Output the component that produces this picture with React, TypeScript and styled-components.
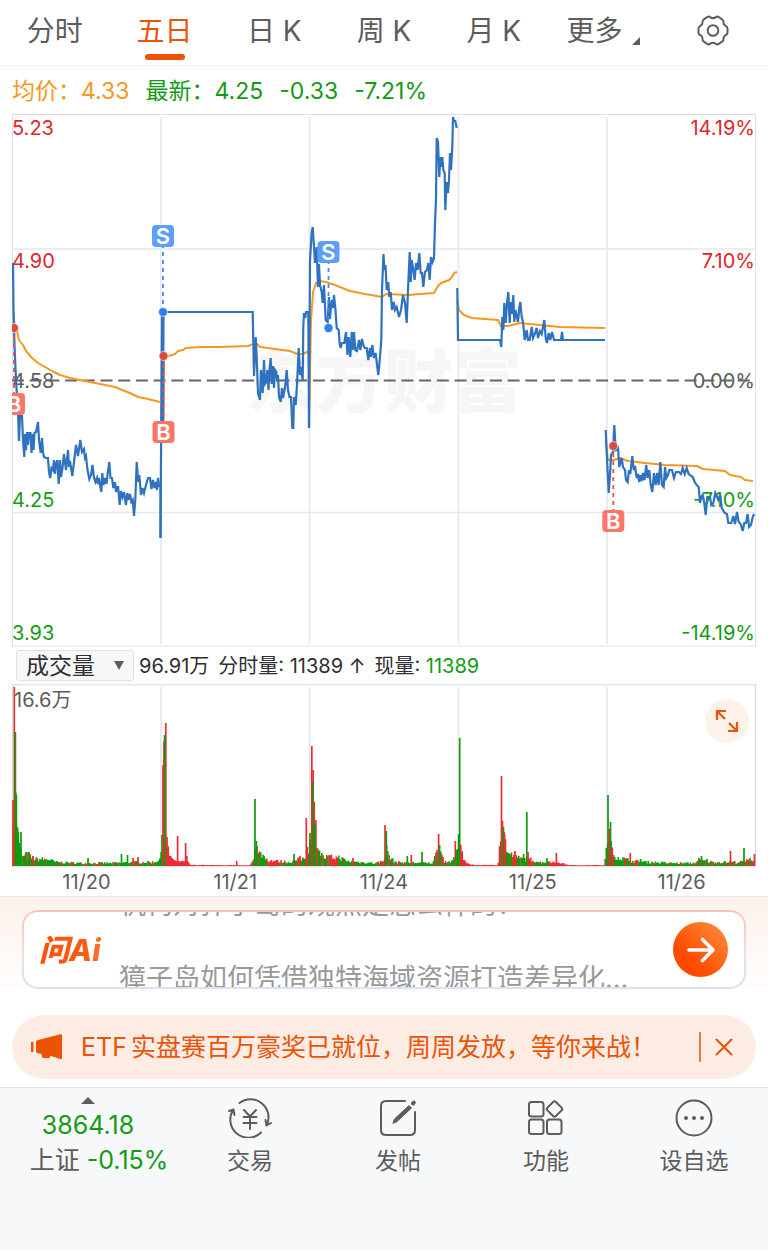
import React from "react";
import styled, { createGlobalStyle, css } from "styled-components";

const Global = createGlobalStyle`
  *, *::before, *::after { box-sizing: border-box; }
  body {
    margin: 0;
    background: #fff;
    color: #333;
    font-family: Inter, "Noto Sans CJK SC", sans-serif;
    font-size: 20px;
    line-height: 28px;
  }
  button { border: 0; padding: 0; margin: 0; background: none; font: inherit; color: inherit; cursor: pointer; }
  a { color: inherit; text-decoration: none; }
  svg { display: block; }
`;

const RED = "#e0252b";
const GREEN = "#149b14";
const BLUE = "#2f72bf";
const AMBER = "#f5981d";
const ORANGE = "#ea5404";
const GREY = "#5c5c5c";

/* ---------- layout ---------- */

const Page = styled.div`
  display: flex;
  flex-direction: column;
  min-height: 100vh;
`;

const Tabs = styled.nav`
  display: flex;
  height: 66px;
  border-bottom: 1px solid #f0f0f2;
`;

const Tab = styled.button<{ $active?: boolean }>`
  position: relative;
  flex: 1;
  display: flex;
  align-items: center;
  justify-content: center;
  padding-bottom: 4px;
  font-size: 28px;
  color: ${(p) => (p.$active ? ORANGE : GREY)};
  ${(p) =>
    p.$active &&
    css`
      &::after {
        content: "";
        position: absolute;
        left: calc(50% - 20px);
        bottom: 5px;
        width: 40px;
        height: 6px;
        border-radius: 3px;
        background: ${ORANGE};
      }
    `}
`;

const Corner = styled.span`
  align-self: flex-end;
  margin: 0 0 16px 10px;
  border-left: 8px solid transparent;
  border-bottom: 8px solid ${GREY};
`;

const Quote = styled.div`
  display: flex;
  align-items: center;
  gap: 16px;
  height: 48px;
  padding: 2px 12px 0;
  font-size: 23px;
  color: ${GREEN};
`;

const Average = styled.span`
  color: ${AMBER};
`;

const ChartSvg = styled.svg`
  width: 100%;
  height: auto;
`;

const VolumeHead = styled.div`
  display: flex;
  align-items: center;
  gap: 9px;
  height: 37px;
  padding: 0 16px;
  color: #2e2e33;
  white-space: nowrap;
`;

const Picker = styled.label`
  position: relative;
  width: 118px;
  height: 31px;
  margin-right: -4px;
  &::after {
    content: "";
    position: absolute;
    right: 10px;
    top: 11px;
    border: 5px solid transparent;
    border-top: 9px solid ${GREY};
    border-bottom: 0;
    pointer-events: none;
  }
`;

const PickerSelect = styled.select`
  appearance: none;
  width: 100%;
  height: 100%;
  padding: 0 9px;
  border: 1px solid #dfe1e6;
  border-radius: 3px;
  background: #f6f7f9;
  color: #2e2e33;
  font: inherit;
  font-size: 23px;
  line-height: 28px;
`;

const Up = styled.span`
  color: ${GREEN};
`;

const VolumeBox = styled.div`
  position: relative;
`;

const Expand = styled.button`
  position: absolute;
  top: 15px;
  right: 19px;
  display: grid;
  place-items: center;
  width: 44px;
  height: 44px;
  border-radius: 50%;
  background: #fdf1ea;
`;

const Dates = styled.div`
  display: flex;
  height: 28px;
  padding: 0 12px;
  color: ${GREY};
  span { flex: 1; text-align: center; }
`;

const AiSection = styled.section`
  padding: 13px 22px 0;
  border-top: 1px solid #ebe9ec;
  background: linear-gradient(#fef1eb, #fff 104px);
`;

const AiCard = styled.div`
  display: flex;
  align-items: center;
  height: 79px;
  padding: 0 16px 0 15px;
  border: 2px solid transparent;
  border-radius: 16px;
  background:
    linear-gradient(#fff, #fff) padding-box,
    linear-gradient(#f8c3b8, #f0dce0 55%, #dbe0f2) border-box;
`;

const Logo = styled.span`
  width: 80px;
  font-size: 30px;
  line-height: 40px;
  font-weight: 800;
  font-style: italic;
  white-space: nowrap;
  color: transparent;
  background: linear-gradient(90deg, #ff4e08, #ff5d14 60%, #ff8a50);
  background-clip: text;
`;

const Ticker = styled.div`
  flex: 1;
  display: flex;
  flex-direction: column;
  justify-content: center;
  gap: 36px;
  height: 75px;
  padding-bottom: 16px;
  overflow: hidden;
  font-size: 27px;
  line-height: 38px;
  color: #999;
  white-space: nowrap;
`;

const Go = styled.button`
  display: grid;
  place-items: center;
  width: 55px;
  height: 55px;
  border-radius: 50%;
  background: linear-gradient(45deg, #ff4a00 30%, #ff9340);
`;

const Notice = styled.aside`
  display: flex;
  align-items: center;
  height: 64px;
  margin: 26px 12px 8px;
  padding: 0 23px 0 18px;
  border-radius: 32px;
  background: #fdece4;
  color: ${ORANGE};
  font-size: 25px;
`;

const NoticeText = styled.a`
  flex: 1;
  display: flex;
  gap: 4px;
  margin-left: 18px;
  white-space: nowrap;
`;

const Close = styled.button`
  display: flex;
  align-items: center;
  height: 30px;
  padding-left: 14px;
  border-left: 2px solid #ec7a3e;
`;

const BottomBar = styled.footer`
  flex: 1;
  display: grid;
  grid-template-columns: 176fr 148fr 148fr 148fr 148fr;
  align-items: start;
  padding-bottom: 70px;
  border-top: 1px solid #dfe2e2;
  background: #f6f8fa;
  color: ${GREY};
`;

const IndexCell = styled.button`
  display: flex;
  flex-direction: column;
  align-items: center;
  padding-top: 9px;
  font-size: 25px;
  line-height: 35px;
`;

const Caret = styled.span`
  margin-bottom: 4px;
  border: 7px solid transparent;
  border-top: 0;
  border-bottom-color: ${GREY};
`;

const IndexValue = styled.span`
  color: ${GREEN};
`;

const IndexChange = styled.span`
  padding-left: 22px;
  white-space: nowrap;
`;

const NavItem = styled.a`
  display: flex;
  flex-direction: column;
  align-items: center;
  gap: 6px;
  padding-top: 10px;
  font-size: 23px;
  line-height: 34px;
`;

/* ---------- price chart data: one polyline for each trading day ---------- */

const PRICE = [
  "13,263 13.5,310 14.5,345 16,380 17,396 18,412 19,441 20,416 22,416 23,440 24.3,457 25,434 26,450 27,432 28,445 29,433 30.5,433 31.5,453 32.5,434 33.5,450 34.5,433 36,432 38,422 39,440 40.7,453 42,438 43,452 44,457 46,458 48,458 49,472 50.2,478 51.5,468 53,470 54,460 55,474 56,464 57.3,460 58.7,484 60,460 61,477 62.5,468 64,454 66,470 68,450 69,467 70,461 71,468 72.3,476 74,462 76,445 78,456 80.3,440 82,452 84,449 85,458 86,456 87.5,470 89.3,479 91,475 92.5,465 94,478 95.5,482 97,478 98,484 99,478 100,485 101.3,492 102.3,473 103.5,485 105,478 106.5,484 107.5,475 109.3,462 110.5,478 112,478 113.3,488 115,482 116,492 118,486 119.7,505 121,491 122.5,497 124,492 126,505 127.3,493 128.3,500 130,494 131.3,502 132.7,500 134,516 135.3,500 136.7,462 138.3,482 139.3,475 141,495 142.5,488 144,493 146,485 148,478 150,478 151.5,489 153,480 154.5,488 156,482 157,490 158,478 159,486 160.5,486 160.5,538",
  "160.5,538 161.5,380 162,312 163,430 163.5,312 252.7,312 254,376 255.7,337 256.7,357 258,393 260,400 261,370 262.7,393 264,360 265,384 266.3,382 267.3,370 268.5,390 269.5,370 270.7,358 271.7,384 273,366 274,388 275,370 276.3,372 277.3,382 278,375 279,397 280.7,402 282,388 283,398 284.5,390 285.5,384 286.7,370 288,390 289.5,397 291,397 292.3,428 293.3,428 294,397 295,400 295.7,405 297,385 298.7,348 300,375 301,367 302.7,380 303.3,327 304,313 305.3,318 306,312 308.3,312 309,428",
  "309,428 310,260 311.7,232 312.7,227 314,247 315,263 316.7,247 318,287 319,264 320,285 321.7,292 322.7,303 324,285 325.7,320 327.7,322 329,297 330,319 331,306 332,300 333,308 334,295 335.5,310 336.7,328 338.7,330 339.7,344 340.7,348 342,343 344.3,343 346,332 347.5,355 348.7,337 350.3,357 351.7,332 352.7,350 354,332 355.3,350 357,351 359,340 360.3,350 362,339 363.3,345 364.7,348 366.7,348 368.3,360 370,348 371,357 372.3,345 374,358 375.7,353 377,365 378.3,375 380,357 381.3,340 382,290 383.5,254 384.3,270 385.5,265 386.7,290 388.3,282 389.3,297 390.7,292 392,310 393.7,302 395,310 396.7,307 399,317 401,310 403,295 405,303 406.7,323 408.3,283 409.7,252 410.7,282 411.7,260 413.3,270 414.7,280 416,263 417.7,270 419.3,253 420.7,273 422,273 423.3,287 425,272 427,270 428.3,263 429.7,280 431,257 432.5,262 434,258 435,223 436,200 436.7,138 438,142 439.3,177 440.3,157 441.3,167 442.3,157 443.3,170 444.7,173 445.3,210 446.7,182 448,193 449,180 450,153 451,170 452.3,147 453,117 454,121 455.3,121 456.7,128",
  "457.3,288 458,340 500,340 501.3,347 502.3,317 503.3,330 504.3,303 505.7,323 507,303 508.3,292 509.7,323 510.7,302 511.7,314 513.3,295 514.3,322 515.5,310 516.7,316 518,322 519.3,308 520.3,302 521.7,317 523,322 524.7,340 526.7,330 528,340 529.7,340 531.7,327 533,338 534.7,334 536.7,328 538,338 540,331 541.7,334 544.3,320 545.7,338 547,343 548.7,333 550.3,340 552,332 554,340 561,340 562,332 563,340 605,340",
  "605.7,430 606.7,453 608.7,493 610,475 611,455 613,452 614.3,425 615.7,450 618,448 619.3,467 621.7,458 623,467 625,470 626,480 627.7,482 629,470 630.3,474 632.3,456 633.7,470 635,466 636.7,478 638,474 639.3,482 640.7,475 642,481 643,473 644.5,480 646.3,465 647.5,478 649.3,470 650.7,485 652.3,492 654,473 655.7,485 657.3,473 658.7,485 660.3,462 662,485 663.7,487 665,467 666.3,478 668,475 669.3,470 672,470 674,478 676,472 679,472 681,474 682.7,468 684.7,474 686.7,468 688.7,474 690,475 692.7,477 694.7,482 696.7,485 698.7,487 700,503 701.3,497 702.7,495 704.3,503 705.7,515 707.3,497 710,497 711.3,505 713.3,503 715.3,493 718.3,500 720.3,495 721.7,508 724.7,513 727,514 728.3,523 731.3,523 733.3,516 735,524 737,512 738.7,522 740.7,524 742.7,531 744.3,523 746,523 747.7,514 749,527 751,525 752.7,517 754,514",
];

const AVERAGE = [
  "13.5,312 14.5,325 17,331 19,340 23,345 26,351 32,358 38,363 45,367 52,371 60,375 70,378 80,380 90,382 100,384 115,387 122,390 130,393 138,397 148,399 160,402",
  "163.5,420 164,357 169,356 175,354 178,351 183,350 186,348 200,347 220,347 248,346 256,343 260,347 275,349 290,351 297,354 303,354 309,351",
  "309,428 311,320 313,292 316,283 320,281 326,282 335,285 350,291 365,294 382,297 386,294 408,295 420,294 434,293 438,286 441,283 449,280 452,277 454,273 457,272",
  "457.3,300 459,310 464,315 472,318 485,319 498,320 501,326 508,326 520,323 540,325 560,327 605,328",
  "605.7,440 608,460 614,460 620,458 628,461 645,463 665,465 697,466 703,469 725,471 730,475 741,477 745,480 753,481",
];

const LABELS = [
  { y: 135, left: "5.23", right: "14.19%", color: RED },
  { y: 268, left: "4.90", right: "7.10%", color: RED },
  { y: 388, left: "4.58", right: "0.00%", color: GREY },
  { y: 507, left: "4.25", right: "-7.10%", color: GREEN },
  { y: 640, left: "3.93", right: "-14.19%", color: GREEN },
];

const DAY_LINES = [161, 309.5, 458.5, 607];

type Trade = { kind: "S" | "B"; x: number; box: number; dot: number };

const TRADES: Trade[] = [
  { kind: "B", x: 14, box: 404, dot: 328 },
  { kind: "S", x: 163, box: 236, dot: 312 },
  { kind: "B", x: 163.5, box: 432, dot: 356 },
  { kind: "S", x: 328.5, box: 252, dot: 328 },
  { kind: "B", x: 613.3, box: 521, dot: 446 },
];

function TradeMark({ kind, x, box, dot }: Trade) {
  const sell = kind === "S";
  const line = sell ? "#3f8af2" : "#e8504a";
  return (
    <g>
      <line x1={x} x2={x} y1={box} y2={dot} stroke={line} strokeWidth="1.8" strokeDasharray="4 4" />
      <circle cx={x} cy={dot} r="4.5" fill={sell ? "#2b7ff0" : "#de4a41"} stroke="#fff" strokeOpacity="0.6" />
      <rect x={x - 11} y={box - 11} width="22" height="22" rx="4" fill={sell ? "#5b9ffb" : "#fb7568"} />
      <text x={x} y={box + 8} textAnchor="middle" fontSize="22" fontWeight="600" fill="#fff">
        {kind}
      </text>
    </g>
  );
}

function PriceChart() {
  return (
    <ChartSvg viewBox="0 114 768 533" role="img" aria-label="五日走势">
      <clipPath id="plot">
        <rect x="12" y="114" width="744" height="533" />
      </clipPath>
      <text x="246" y="407" fontSize="69" fontWeight="900" fill="#f6f6f6">
        东方财富
      </text>
      <g stroke="#e6e8ee" strokeWidth="1.6" fill="none">
        <path d="M12 249H755M12 512.5H755" />
        {DAY_LINES.map((x) => (
          <path key={x} d={`M${x} 117V644`} />
        ))}
      </g>
      <rect x="12.5" y="114.5" width="743" height="531.5" fill="none" stroke="#dfe0e4" />
      {LABELS.map((l) => (
        <g key={l.y} fontSize="20" fill={l.color}>
          <text x="12" y={l.y}>{l.left}</text>
          <text x="755" y={l.y} textAnchor="end">{l.right}</text>
        </g>
      ))}
      <path d="M12 380.5H755" stroke="#666" strokeWidth="1.8" strokeDasharray="12 5.7" />
      <g clipPath="url(#plot)" fill="none" strokeLinejoin="round">
        {AVERAGE.map((pts) => (
          <polyline key={pts} points={pts} stroke={AMBER} strokeWidth="2" />
        ))}
        {PRICE.map((pts) => (
          <polyline key={pts} points={pts} stroke={BLUE} strokeWidth="2.2" strokeLinejoin="miter" />
        ))}
      </g>
      <g clipPath="url(#plot)">
        {TRADES.map((t) => (
          <TradeMark key={`${t.x}${t.kind}`} {...t} />
        ))}
      </g>
    </ChartSvg>
  );
}

/* ---------- volume chart: a low envelope with single tall bars over it ---------- */

const ENVELOPE: [number, number][] = [
  [13, 66], [16, 66], [18, 32], [20, 18], [23, 9], [28, 11], [34, 7], [48, 7], [56, 4], [80, 3], [110, 3], [140, 4],
  [155, 4], [160, 8], [167, 26], [169, 12], [172, 6], [188, 4], [190, 1], [250, 0.6], [253, 8], [256, 24], [258, 13],
  [262, 12], [268, 6], [290, 4], [296, 6], [308, 9], [314, 60], [316, 36], [319, 18], [323, 9], [340, 9], [346, 5],
  [375, 3], [383, 5], [387, 18], [390, 8], [396, 4], [432, 3], [437, 14], [440, 18], [444, 5], [452, 4], [458, 14],
  [461, 18], [464, 5], [470, 2], [476, 0.8], [498, 1.2], [501, 40], [504, 32], [508, 13], [516, 9], [524, 7],
  [530, 7], [540, 4], [560, 4], [568, 0.8], [604, 0.8], [607, 20], [611, 20], [614, 11], [622, 8], [632, 5],
  [650, 4], [670, 3], [694, 3], [700, 6], [712, 4], [728, 4], [740, 4], [755, 7],
];

const SPIKES: [number, number, "r" | "g"][] = [
  [13, 66, "r"], [14.3, 179, "r"], [15.4, 134, "g"], [16.4, 71, "g"], [17.6, 38, "g"], [21, 34, "g"], [26, 14, "g"],
  [29, 14, "g"], [33, 10, "r"], [88, 8, "g"], [121.5, 12, "g"], [127.5, 11, "g"], [133, 8, "r"], [138, 9, "r"],
  [162, 31, "g"], [163, 101, "r"], [164, 125, "r"], [165.8, 143, "r"], [164.6, 131, "g"], [168, 20, "r"],
  [177.6, 30, "r"], [185.6, 23, "r"], [186.8, 10, "r"], [236.7, 5, "r"], [255, 67, "g"], [256.4, 25, "g"],
  [294, 12, "g"], [300, 10, "r"], [306.3, 48, "r"], [307.4, 19, "r"], [310, 33, "g"], [311.8, 120, "r"],
  [313.2, 96, "r"], [312.6, 84, "g"], [314.2, 64, "r"], [315, 42, "g"], [353, 8, "r"], [385, 41, "r"],
  [386.3, 35, "g"], [407.3, 10, "g"], [411.3, 11, "r"], [422, 14, "g"], [438.6, 32, "r"], [439.6, 21, "g"],
  [455.3, 25, "r"], [456.4, 16, "g"], [458.6, 32, "g"], [459.7, 128, "g"], [460.8, 21, "r"], [501.5, 90, "r"],
  [502.5, 45, "r"], [503.5, 39, "g"], [504.6, 31, "r"], [515, 15, "r"], [523.6, 12, "g"], [526.8, 54, "g"],
  [528, 14, "r"], [547, 8, "g"], [556.4, 13, "r"], [608, 71, "g"], [609.2, 37, "r"], [610.5, 44, "g"],
  [611.7, 19, "r"], [630.3, 13, "r"], [640.5, 7, "g"], [699, 8, "g"], [701.5, 10, "g"], [707, 7, "g"],
  [730.5, 15, "r"], [744, 18, "g"], [750, 8, "g"], [754.5, 12, "r"],
];

const RED_ONLY: [number, number][] = [[166, 252], [461, 500], [548, 606]];

function envelopeAt(x: number) {
  const i = ENVELOPE.findIndex((p) => p[0] > x);
  if (i < 1) return 4;
  const [x0, h0] = ENVELOPE[i - 1];
  const [x1, h1] = ENVELOPE[i];
  return h0 + ((h1 - h0) * (x - x0)) / (x1 - x0);
}

function volumePaths() {
  const out = { r: "", g: "" };
  let seed = 7;
  const random = () => (seed = (seed * 16807) % 2147483647) / 2147483647;
  const bar = (x: number, h: number, c: "r" | "g") => {
    out[c] += `M${x.toFixed(1)} 866V${(866 - h).toFixed(1)}`;
  };
  for (let x = 13.5; x < 755; x += 1.2) {
    const h = Math.max(0.8, envelopeAt(x) * (0.6 + random() * 0.7));
    const redOnly = RED_ONLY.some(([a, b]) => x > a && x < b);
    bar(x, h, redOnly || random() > 0.68 ? "r" : "g");
  }
  return out;
}

const bars = volumePaths();

function VolumeChart() {
  return (
    <ChartSvg viewBox="0 684 768 184" role="img" aria-label="成交量">
      <rect x="12.5" y="684.8" width="743" height="182" fill="none" stroke="#d5dae2" />
      {DAY_LINES.map((x) => (
        <path key={x} d={`M${x} 687V866`} stroke="#e2e5ec" strokeWidth="1.6" />
      ))}
      <text x="14" y="707" fontSize="20" fill={GREY}>16.6万</text>
      <path d={bars.r} stroke="#ee2b31" strokeWidth="1.6" />
      <path d={bars.g} stroke="#0c9c0c" strokeWidth="1.6" />
      {SPIKES.map(([x, h, c]) => (
        <path key={`${x}${c}`} d={`M${x} 866v${-h}`} stroke={c === "r" ? "#ee2b31" : "#0c9c0c"} strokeWidth="1.7" />
      ))}
    </ChartSvg>
  );
}

/* ---------- icons ---------- */

const stroke = { fill: "none", stroke: GREY, strokeWidth: 2, strokeLinecap: "round", strokeLinejoin: "round" } as const;

const GearIcon = () => (
  <svg width="34" height="31" viewBox="0 0 34 32" {...stroke}>
    <path d="M11 2.2Q12.500 1 14 2.200Q17 4.300 20 2.200Q21.500 1 23 2.200L26.800 4.800Q28 5.700 27.800 7.200Q27.600 10 30 11.200Q32 12.200 32 14V18Q32 19.800 30 20.800Q27.600 22 27.800 24.800Q28 26.300 26.800 27.200L23 29.800Q21.500 31 20 29.800Q17 27.700 14 29.800Q12.500 31 11 29.800L7.200 27.200Q6 26.300 6.200 24.800Q6.400 22 4 20.800Q2 19.800 2 18V14Q2 12.200 4 11.200Q6.400 10 6.200 7.200Q6 5.700 7.200 4.800Z" />
    <circle cx="17" cy="16" r="5.500" />
  </svg>
);

const ExpandIcon = () => (
  <svg width="24" height="24" viewBox="0 0 24 24" fill="none" stroke={ORANGE} strokeWidth="2.2">
    <path d="M2 11V2H11M2.500 2.500L10 10M22 13V22H13M21.500 21.500L14 14" />
  </svg>
);

const ArrowIcon = () => (
  <svg width="30" height="28" viewBox="0 0 30 28" fill="none" stroke="#fff" strokeWidth="3.600" strokeLinecap="round" strokeLinejoin="round">
    <path d="M3 14H27M16.500 3.500L27 14L16.500 24.500" />
  </svg>
);

const HornIcon = () => (
  <svg width="33" height="28" viewBox="0 0 33 28" fill={ORANGE}>
    <path d="M1 9H3.500V19H1ZM6 9Q6 7.500 8 7L30.500 1.200Q32 1 32 2.500V25Q32 26.500 30.500 26L20 22.800V24Q20 25.500 18.500 25H13.500Q12.500 25 12 23.500L11.500 21L8 20.200Q6 20 6 18.500Z" />
  </svg>
);

const CloseIcon = () => (
  <svg width="18" height="18" viewBox="0 0 18 18" fill="none" stroke={ORANGE} strokeWidth="2" strokeLinecap="round">
    <path d="M1.500 1.500L16.500 16.500M16.500 1.500L1.500 16.500" />
  </svg>
);

const TradeIcon = () => (
  <svg width="44" height="40" viewBox="0 0 44 40" {...stroke}>
    <path d="M11.500 5A18 18 0 0 1 38.500 27.500L43 25M38.500 27.500L37.500 22M33 34.500A18 18 0 0 1 5.500 11.500L1 13M5.500 11.500L6.500 17" />
    <path d="M16 12L22 18.500L28 12M15.500 19H28.500M15.500 25H28.500M22 19V31" />
  </svg>
);

const PostIcon = () => (
  <svg width="40" height="40" viewBox="0 0 40 40" {...stroke}>
    <path d="M27 3H8Q3 3 3 8V32Q3 37 8 37H32Q37 37 37 32V14" />
    <path d="M15 25L16.500 21L31 7.500L33.500 10L19 23.500Z" fill={GREY} strokeWidth="1" />
    <path d="M35 5.500L35.800 4.700" strokeWidth="4" />
  </svg>
);

const GridIcon = () => (
  <svg width="40" height="40" viewBox="0 0 40 40" {...stroke}>
    <rect x="3" y="4" width="14.500" height="14.500" rx="2.500" />
    <rect x="3" y="21.500" width="14.500" height="14.500" rx="2.500" />
    <rect x="21" y="21.500" width="14.500" height="14.500" rx="2.500" />
    <rect x="22.500" y="5" width="12" height="12" rx="2" transform="rotate(45 28.500 11)" />
  </svg>
);

const MoreIcon = () => (
  <svg width="40" height="40" viewBox="0 0 40 40" {...stroke}>
    <circle cx="20" cy="20" r="17.500" />
    <g fill={GREY} stroke="none">
      <circle cx="12" cy="20" r="2" />
      <circle cx="20" cy="20" r="2" />
      <circle cx="28" cy="20" r="2" />
    </g>
  </svg>
);

/* ---------- page ---------- */

const NAV = [
  { label: "交易", Icon: TradeIcon },
  { label: "发帖", Icon: PostIcon },
  { label: "功能", Icon: GridIcon },
  { label: "设自选", Icon: MoreIcon },
];

export default function App() {
  return (
    <Page>
      <Global />
      <Tabs>
        {["分时", "五日", "日 K", "周 K", "月 K"].map((t) => (
          <Tab key={t} $active={t === "五日"}>{t}</Tab>
        ))}
        <Tab>更多<Corner /></Tab>
        <Tab aria-label="设置"><GearIcon /></Tab>
      </Tabs>

      <Quote>
        <Average>均价：4.33</Average>
        <span>最新：4.25</span>
        <span>-0.33</span>
        <span>-7.21%</span>
      </Quote>

      <PriceChart />

      <VolumeHead>
        <Picker>
          <PickerSelect aria-label="指标" defaultValue="成交量">
            <option>成交量</option>
            <option>成交额</option>
          </PickerSelect>
        </Picker>
        <span>96.91万</span>
        <span>分时量: 11389 ↑</span>
        <span>现量: <Up>11389</Up></span>
      </VolumeHead>

      <VolumeBox>
        <VolumeChart />
        <Expand aria-label="全屏"><ExpandIcon /></Expand>
      </VolumeBox>
      <Dates>
        {["11/20", "11/21", "11/24", "11/25", "11/26"].map((d) => (
          <span key={d}>{d}</span>
        ))}
      </Dates>

      <AiSection>
        <AiCard>
          <Logo>问Ai</Logo>
          <Ticker>
            <span>机构对獐子岛的观点是怎么样的?</span>
            <span>獐子岛如何凭借独特海域资源打造差异化...</span>
          </Ticker>
          <Go aria-label="提问"><ArrowIcon /></Go>
        </AiCard>
      </AiSection>

      <Notice>
        <HornIcon />
        <NoticeText href="#etf">
          <span>ETF</span>
          <span>实盘赛百万豪奖已就位，周周发放，等你来战！</span>
        </NoticeText>
        <Close aria-label="关闭"><CloseIcon /></Close>
      </Notice>

      <BottomBar>
        <IndexCell>
          <Caret />
          <IndexValue>3864.18</IndexValue>
          <IndexChange>上证 <IndexValue>-0.15%</IndexValue></IndexChange>
        </IndexCell>
        {NAV.map(({ label, Icon }) => (
          <NavItem key={label} href="#nav">
            <Icon />
            {label}
          </NavItem>
        ))}
      </BottomBar>
    </Page>
  );
}
